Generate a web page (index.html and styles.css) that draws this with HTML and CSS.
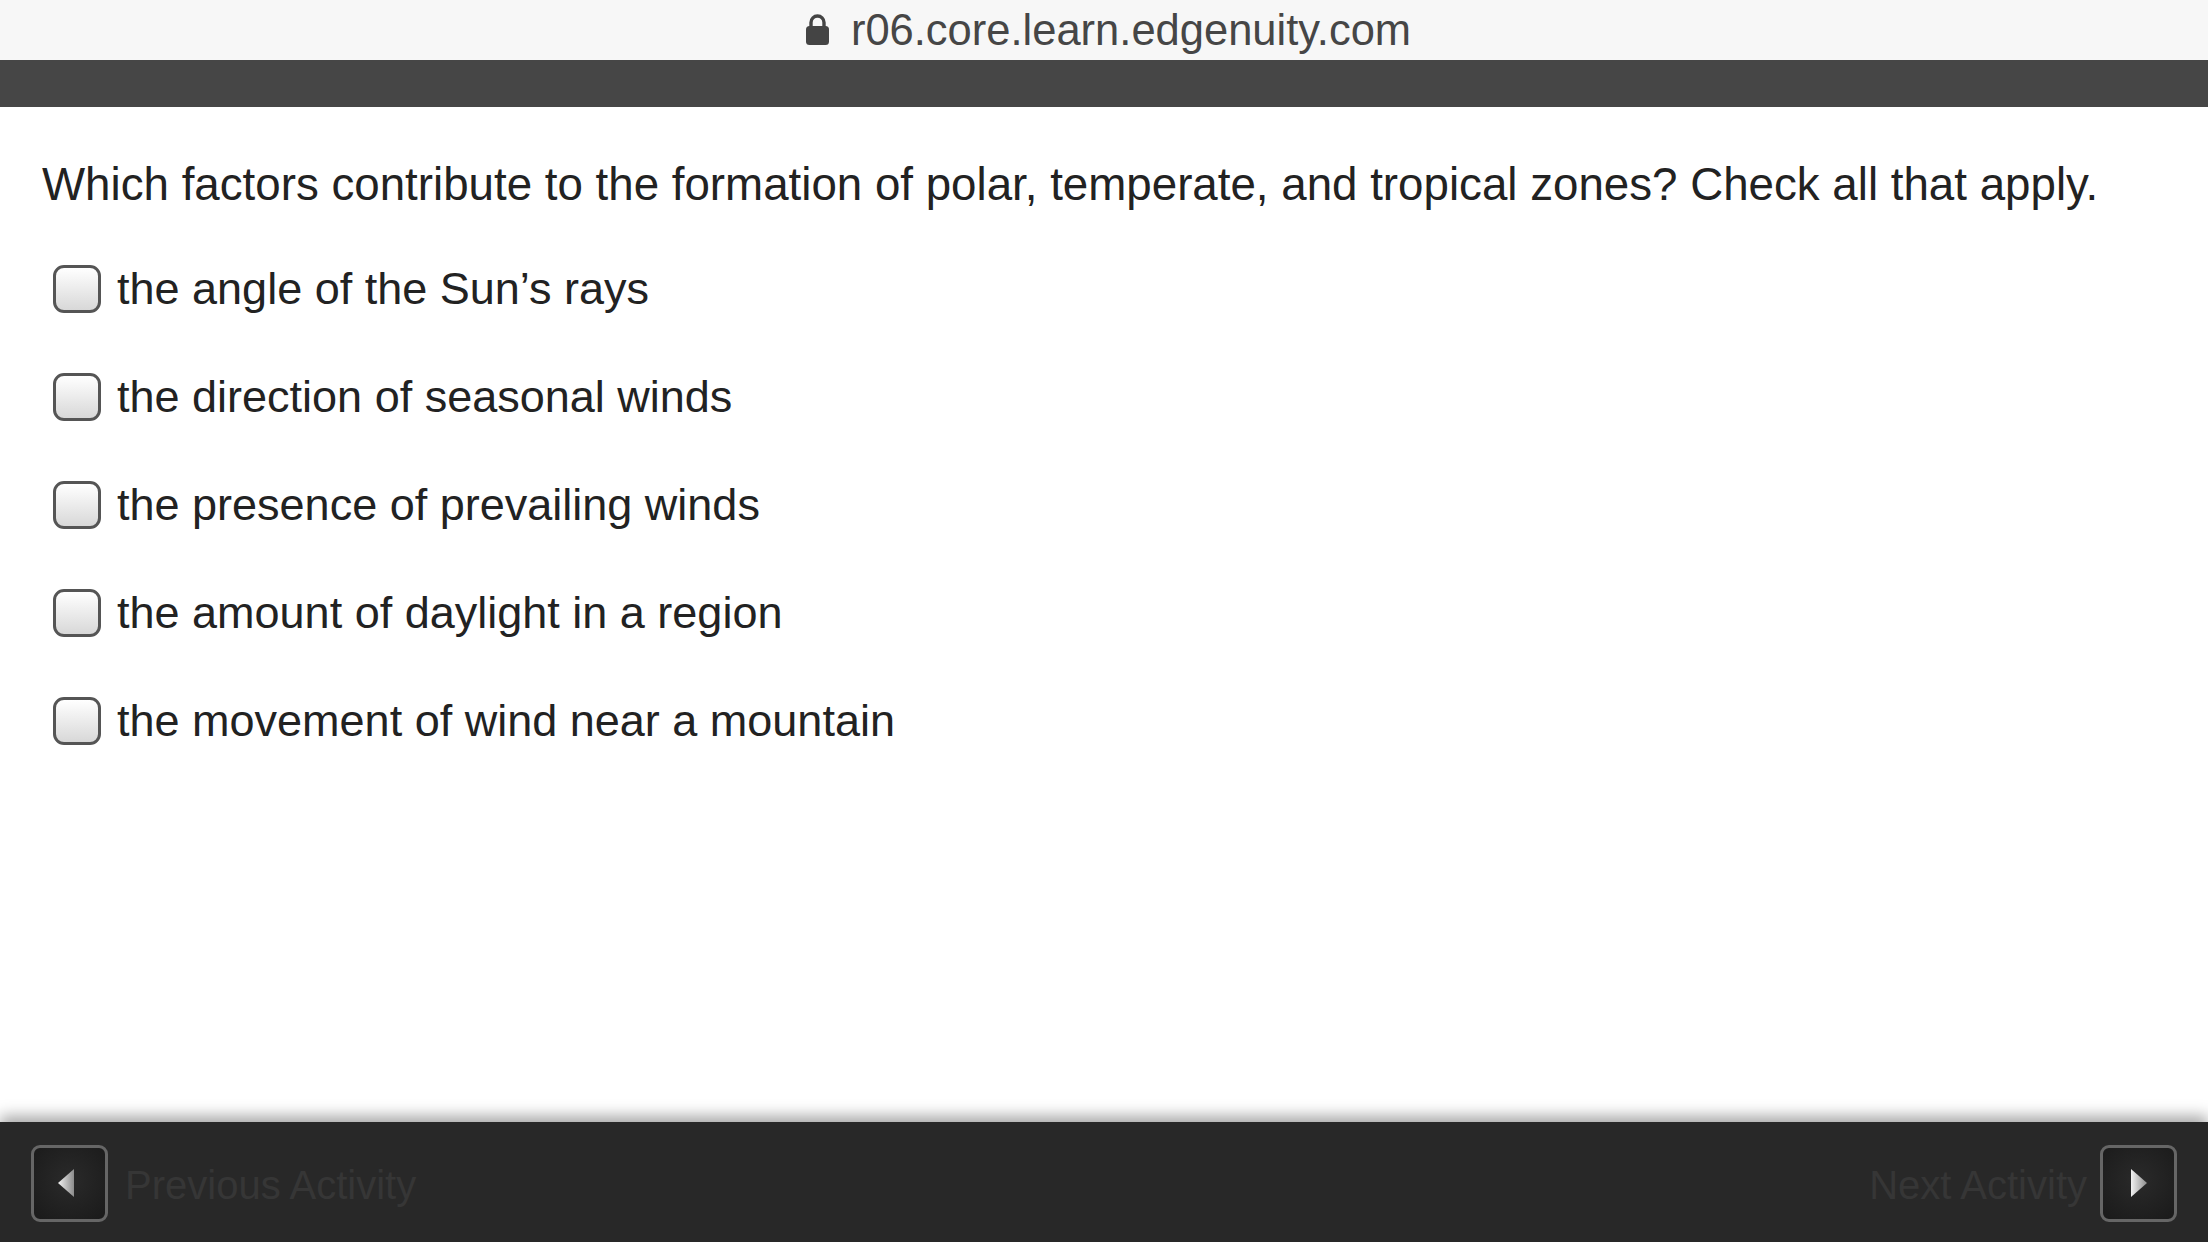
FILE: index.html
```html
<!DOCTYPE html>
<html>
<head>
<meta charset="utf-8">
<link rel="stylesheet" href="styles.css">
</head>
<body>
<div class="page">
  <div class="addressbar">
    <svg class="lock" viewBox="0 0 25 32" width="25" height="32">
      <path d="M6 14 V9.5 A6.5 6.5 0 0 1 19 9.5 V14" fill="none" stroke="#444" stroke-width="3.4"/>
      <rect x="1" y="13" width="23" height="19" rx="3.5" fill="#444"/>
    </svg>
    <span class="url">r06.core.learn.edgenuity.com</span>
  </div>
  <div class="toolbar"></div>
  <main class="content">
    <p class="question">Which factors contribute to the formation of polar, temperate, and tropical zones? Check all that apply.</p>
    <ul class="options">
      <li class="option"><span class="box"></span><span class="label">the angle of the Sun’s rays</span></li>
      <li class="option"><span class="box"></span><span class="label">the direction of seasonal winds</span></li>
      <li class="option"><span class="box"></span><span class="label">the presence of prevailing winds</span></li>
      <li class="option"><span class="box"></span><span class="label">the amount of daylight in a region</span></li>
      <li class="option"><span class="box"></span><span class="label">the movement of wind near a mountain</span></li>
    </ul>
  </main>
  <footer class="footer">
    <div class="nav nav-prev">
      <span class="navbtn">
        <svg viewBox="0 0 20 30" width="20" height="30">
          <defs><linearGradient id="g1" x1="0" y1="0" x2="1" y2="0"><stop offset="0" stop-color="#f2f2f2"/><stop offset="1" stop-color="#8c8c8c"/></linearGradient></defs>
          <path d="M18 1 L18 29 L2 15 Z" fill="url(#g1)"/>
        </svg>
      </span>
      <span class="navtext">Previous Activity</span>
    </div>
    <div class="nav nav-next">
      <span class="navtext">Next Activity</span>
      <span class="navbtn">
        <svg viewBox="0 0 20 30" width="20" height="30">
          <defs><linearGradient id="g2" x1="0" y1="0" x2="1" y2="0"><stop offset="0" stop-color="#f2f2f2"/><stop offset="1" stop-color="#8c8c8c"/></linearGradient></defs>
          <path d="M2 1 L2 29 L18 15 Z" fill="url(#g2)"/>
        </svg>
      </span>
    </div>
  </footer>
</div>
</body>
</html>
```

FILE: styles.css
```css
* { box-sizing: border-box; }
html, body { margin: 0; padding: 0; }
body {
  font-family: "Liberation Sans", Arial, Helvetica, sans-serif;
  background: #ffffff;
  color: #222;
}
.page {
  width: 2208px;
  height: 1242px;
  display: flex;
  flex-direction: column;
  overflow: hidden;
}
.addressbar {
  height: 60px;
  background: #f7f7f7;
  display: flex;
  align-items: center;
  justify-content: center;
  gap: 21px;
  padding-left: 8px;
}
.lock { display: block; margin-top: -2px; }
.url {
  font-size: 43.5px;
  color: #464646;
}
.toolbar {
  height: 47px;
  background: #464646;
}
.content {
  flex: 1;
  padding: 52px 0 0 42px;
}
.question {
  margin: 0;
  font-size: 45.7px;
  line-height: 52px;
  color: #222;
}
.options {
  list-style: none;
  margin: 0;
  padding: 24px 0 0 11px;
}
.option {
  display: flex;
  align-items: center;
  height: 108px;
}
.box {
  width: 48px;
  height: 48px;
  border: 3px solid #555;
  border-radius: 11px;
  background: linear-gradient(#ffffff, #d8d8d8);
  flex: none;
}
.label {
  margin-left: 16px;
  font-size: 45px;
  color: #222;
}
.footer {
  height: 120px;
  background: #282828;
  display: flex;
  align-items: center;
  justify-content: space-between;
  padding: 2px 31px 0;
  box-shadow: 0 -6px 14px rgba(0,0,0,0.35);
}
.nav {
  display: flex;
  align-items: center;
  gap: 17px;
}
.navbtn {
  width: 77px;
  height: 77px;
  border: 3px solid #666;
  border-radius: 9px;
  background: radial-gradient(circle at 50% 45%, #2a2a2a, #1a1a1a);
  display: flex;
  align-items: center;
  justify-content: center;
}
.nav-prev .navbtn svg { margin-left: -8px; }
.navbtn svg { display: block; }
.navtext {
  font-size: 40px;
  color: #363636;
  padding-top: 4px;
}
.nav-next .navtext { margin-right: -4px; }
```
